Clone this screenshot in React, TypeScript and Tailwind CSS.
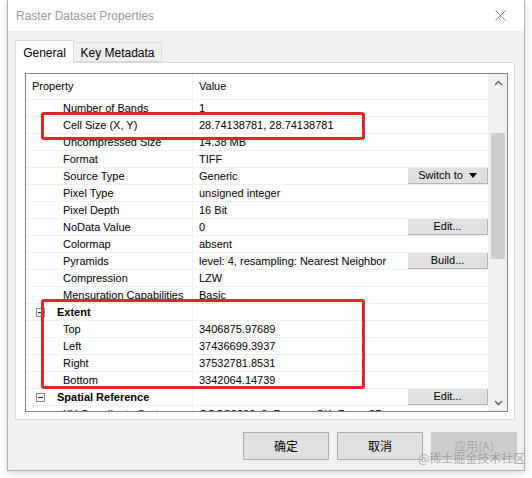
import React from 'react'

type Row =
  | { kind: 'prop'; name: string; value: string; button?: string }
  | { kind: 'cat'; name: string; button?: string }

const rows: Row[] = [
  { kind: 'prop', name: 'Number of Bands', value: '1' },
  { kind: 'prop', name: 'Cell Size (X, Y)', value: '28.74138781, 28.74138781' },
  { kind: 'prop', name: 'Uncompressed Size', value: '14.38 MB' },
  { kind: 'prop', name: 'Format', value: 'TIFF' },
  { kind: 'prop', name: 'Source Type', value: 'Generic', button: 'Switch to' },
  { kind: 'prop', name: 'Pixel Type', value: 'unsigned integer' },
  { kind: 'prop', name: 'Pixel Depth', value: '16 Bit' },
  { kind: 'prop', name: 'NoData Value', value: '0', button: 'Edit...' },
  { kind: 'prop', name: 'Colormap', value: 'absent' },
  { kind: 'prop', name: 'Pyramids', value: 'level: 4, resampling: Nearest Neighbor', button: 'Build...' },
  { kind: 'prop', name: 'Compression', value: 'LZW' },
  { kind: 'prop', name: 'Mensuration Capabilities', value: 'Basic' },
  { kind: 'cat', name: 'Extent' },
  { kind: 'prop', name: 'Top', value: '3406875.97689' },
  { kind: 'prop', name: 'Left', value: '37436699.3937' },
  { kind: 'prop', name: 'Right', value: '37532781.8531' },
  { kind: 'prop', name: 'Bottom', value: '3342064.14739' },
  { kind: 'cat', name: 'Spatial Reference', button: 'Edit...' },
  { kind: 'prop', name: 'XY Coordinate System', value: 'CGCS2000_3_Degree_GK_Zone_37' },
]

function CellButton({ label }: { label: string }) {
  return (
    <div className="flex h-[16px] w-[80px] shrink-0 items-center justify-center gap-[6px] border-b border-r border-[#b4b4b4] bg-[#e1e1e1] text-[11px] text-black">
      <span>{label}</span>
      {label === 'Switch to' ? (
        <svg width="8" height="5" viewBox="0 0 8 5">
          <path d="M0 0h8L4 5z" fill="#000" />
        </svg>
      ) : null}
    </div>
  )
}

function Collapse() {
  return (
    <span className="flex h-[9px] w-[9px] items-center justify-center border border-[#8a8a8a] bg-white">
      <span className="h-px w-[5px] bg-[#222]" />
    </span>
  )
}

function GridRow({ row }: { row: Row }) {
  return (
    <div className="flex h-[17px] shrink-0 border-b border-[#f0f0f0]">
      <div className="flex w-[167px] shrink-0 items-center overflow-hidden whitespace-nowrap border-r border-[#f0f0f0]">
        {row.kind === 'cat' ? (
          <>
            <span className="ml-[10px] mr-[12px]">
              <Collapse />
            </span>
            <span className="font-bold">{row.name}</span>
          </>
        ) : (
          <span className="pl-[37px]">{row.name}</span>
        )}
      </div>
      <div className="flex min-w-0 flex-1 items-center justify-between overflow-hidden whitespace-nowrap pl-[6px]">
        <span>{row.kind === 'prop' ? row.value : ''}</span>
        {row.button ? <CellButton label={row.button} /> : null}
      </div>
    </div>
  )
}

function Chevron({ up }: { up?: boolean }) {
  return (
    <div className="flex h-[17px] items-center justify-center">
      <svg width="9" height="6" viewBox="0 0 9 6">
        <path
          d={up ? 'M1 5L4.5 1.5L8 5' : 'M1 1L4.5 4.5L8 1'}
          fill="none"
          stroke="#606060"
          strokeWidth="1.4"
        />
      </svg>
    </div>
  )
}

function PropertyGrid() {
  return (
    <div className="flex h-[339px] border border-[#828282] bg-white">
      <div className="flex min-w-0 flex-1 flex-col border-r border-[#f0f0f0]">
        <div className="flex h-[26px] shrink-0 border-b border-[#f0f0f0]">
          <div className="flex w-[167px] items-center border-r border-[#f0f0f0] pl-[6px]">Property</div>
          <div className="flex items-center pl-[6px]">Value</div>
        </div>
        <div className="flex min-h-0 flex-1 flex-col overflow-hidden">
          {rows.map((row) => (
            <GridRow key={row.name} row={row} />
          ))}
        </div>
      </div>
      <div className="flex w-[18px] shrink-0 flex-col bg-[#f0f0f0]">
        <Chevron up />
        <div className="flex-1 px-[2px] pt-[42px] pb-[135px]">
          <div className="h-full bg-[#cdcdcd]" />
        </div>
        <Chevron />
      </div>
    </div>
  )
}

function DialogButton({ label, disabled }: { label: string; disabled?: boolean }) {
  return (
    <div
      className={`flex h-[28px] w-[86px] items-center justify-center border text-[12px] ${
        disabled
          ? 'border-[#cccccc] bg-[#cccccc] text-[#a8a8a8]'
          : 'border-[#adadad] bg-[#e1e1e1] text-black'
      }`}
    >
      {label}
    </div>
  )
}

export default function App() {
  return (
    <div
      className="relative h-[478px] w-[532px] overflow-hidden bg-white text-[11px] text-black"
      style={{ fontFamily: '"Liberation Sans", "Noto Sans CJK SC", sans-serif' }}
    >
      <div className="ml-[7px] flex h-[471px] w-[518px] flex-col border border-t-0 border-[#b0b0b0] shadow-[0_2px_8px_rgba(0,0,0,0.18)]">
        <div className="flex h-[31px] shrink-0 items-center justify-between bg-white pl-[8px] pr-[18px]">
          <span className="text-[12px] text-[#9a9a9a]">Raster Dataset Properties</span>
          <svg width="11" height="11" viewBox="0 0 11 11">
            <path d="M0.5 0.5L10.5 10.5M10.5 0.5L0.5 10.5" stroke="#8a8a8a" strokeWidth="1" />
          </svg>
        </div>
        <div className="flex flex-1 flex-col bg-[#f0f0f0] pl-[7px] pr-[9px] pt-[9px]">
          <div className="relative z-10 flex h-[23px] items-start text-[12px]">
            <div className="flex h-[23px] w-[59px] items-center justify-center border border-b-0 border-[#d9d9d9] bg-white pt-px">
              General
            </div>
            <div className="mt-[2px] flex h-[20px] w-[88px] items-center justify-center border border-l-0 border-[#d9d9d9] bg-[#f0f0f0] pt-px">
              Key Metadata
            </div>
          </div>
          <div className="-mt-px h-[358px] border border-[#d9d9d9] bg-white pl-[9px] pr-[6px] pt-[10px]">
            <PropertyGrid />
          </div>
          <div className="-mr-[2px] mt-[12px] flex justify-end gap-[8px]" style={{ fontFamily: '"Noto Sans CJK SC", sans-serif' }}>
            <DialogButton label="确定" />
            <DialogButton label="取消" />
            <DialogButton label="应用(A)" disabled />
          </div>
        </div>
      </div>

      <div className="pointer-events-none absolute left-[41px] top-[112px] h-[28px] w-[324px] rounded-[3px] border-[3px] border-[#e3262a]" />
      <div className="pointer-events-none absolute left-[41px] top-[299px] h-[90px] w-[324px] rounded-[3px] border-[3px] border-[#e3262a]" />

      <div
        className="pointer-events-none absolute left-[418px] top-[449px] text-[12px] text-[rgba(140,140,140,0.7)]"
        style={{ fontFamily: '"Noto Sans CJK SC", sans-serif' }}
      >
        @稀土掘金技术社区
      </div>
    </div>
  )
}
